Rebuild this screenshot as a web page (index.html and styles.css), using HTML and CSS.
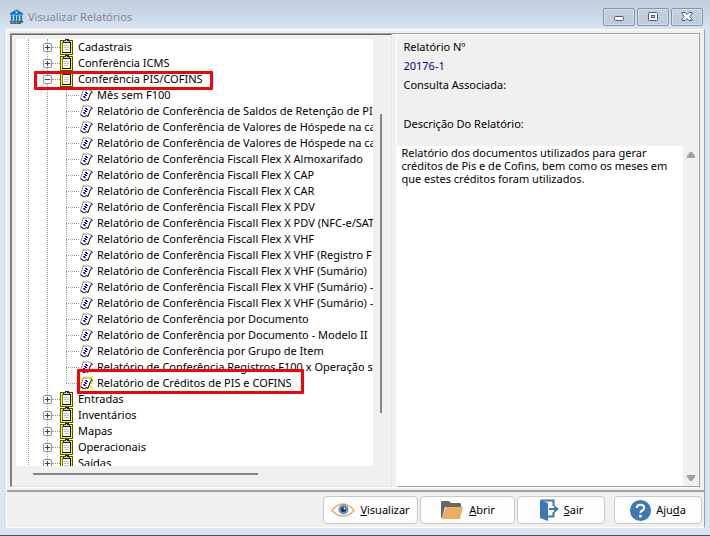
FILE: index.html
```
<!DOCTYPE html>
<html lang="pt-BR">
<head>
<meta charset="utf-8">
<title>Visualizar Relatórios</title>
<link rel="stylesheet" href="styles.css">
</head>
<body>
<svg class="defs" aria-hidden="true">
  <symbol id="folder" viewBox="0 0 13 16">
    <path d="M0 1h13v15H0z" fill="#555500"/>
    <path d="M1 2h11v13H1z" fill="#ffff20"/>
    <path d="M2 3h9v11H2z" fill="#fff"/>
    <path d="M10 3h1v11H2v-1h8z" fill="#000"/>
    <path d="M2.500 3v10" stroke="#808000"/>
    <path d="M4 6.500h5M4 8.500h5M4 10.500h5" stroke="#c4c4c4"/>
    <path d="M3 2h2V0h4v2h1v2H3z" fill="#222"/>
    <path d="M4 2h5v1H4zM6 1h1v1H6z" fill="#ccc"/>
  </symbol>
  <symbol id="leaf" viewBox="0 0 14 14">
    <path d="M4.500 1.500l3 1 1-1 4 1.500-3.500 9-2-1-1.500 1.500-4-2z" fill="#fff" stroke="#888"/>
    <path d="M12.500 3l1 1.500-2 1-2.500 7-2-1-1.500 1.500-4-2" fill="none" stroke="#222"/>
    <path d="M6 4.500h2M7 5.500h2M5 6.500h2M6 7.500h2M4 8.500h2M5 9.500h2" fill="none" stroke="#0000ff"/>
  </symbol>
  <symbol id="plus" viewBox="0 0 9 9">
    <rect x=".5" y=".5" width="8" height="8" rx="1" fill="#f7f7f7" stroke="#919191"/>
    <path d="M2 4.500h5M4.500 2v5" stroke="#24428a"/>
  </symbol>
  <symbol id="minus" viewBox="0 0 9 9">
    <rect x=".5" y=".5" width="8" height="8" rx="1" fill="#f7f7f7" stroke="#919191"/>
    <path d="M2 4.500h5" stroke="#24428a"/>
  </symbol>
</svg>
<div class="window">
  <header class="titlebar">
    <svg class="app-icon" viewBox="0 0 16 16" aria-hidden="true">
      <path d="M1 5.500V4l7-4 7 4v1.500z" fill="#087bb8"/>
      <path d="M7 2h2v2H7z" fill="#cde5f2"/>
      <path d="M3 6v6M6.500 6v6M9.500 6v6M13 6v6" stroke="#087bb8" stroke-width="2"/>
      <path d="M1 12h14v1.500l-3 2H2l-1-1z" fill="#566270"/>
      <path d="M3 13.500h2M7 14h2" stroke="#bcc7d2"/>
    </svg>
    <h1>Visualizar Relatórios</h1>
    <button class="caption" aria-label="Minimizar"><svg viewBox="0 0 12 10"><rect x="1.500" y="4.500" width="9" height="4" rx="1" fill="#fff" stroke="#535666"/></svg></button>
    <button class="caption" aria-label="Maximizar"><svg viewBox="0 0 12 10"><rect x="1.500" y=".5" width="9" height="8" rx="1" fill="#fff" stroke="#535666"/><rect x="4.500" y="3.500" width="3" height="2" fill="#c5d3e4" stroke="#535666"/></svg></button>
    <button class="caption" aria-label="Fechar"><svg viewBox="0 0 12 10"><path d="M1 .5h3l2 2 2-2h3v1.500L8.500 4.500 11 7v1.500H8l-2-2-2 2H1V7l2.500-2.500L1 2z" fill="#fff" stroke="#535666"/></svg></button>
  </header>
  <div class="client">
    <main class="panes">
      <nav class="tree-pane" aria-label="Relatórios">
        <div class="tree-view">
          <ul class="tree">
            <li class="node"><svg class="toggle"><use href="#plus"/></svg><svg class="folder"><use href="#folder"/></svg>Cadastrais</li>
            <li class="node"><svg class="toggle"><use href="#plus"/></svg><svg class="folder"><use href="#folder"/></svg>Conferência ICMS</li>
            <li>
              <div class="node marked-branch"><svg class="toggle"><use href="#minus"/></svg><svg class="folder"><use href="#folder"/></svg>Conferência PIS/COFINS</div>
              <ul class="leaves">
                <li><svg class="leaf"><use href="#leaf"/></svg>Mês sem F100</li>
                <li><svg class="leaf"><use href="#leaf"/></svg>Relatório de Conferência de Saldos de Retenção de PI</li>
                <li><svg class="leaf"><use href="#leaf"/></svg>Relatório de Conferência de Valores de Hóspede na ca</li>
                <li><svg class="leaf"><use href="#leaf"/></svg>Relatório de Conferência de Valores de Hóspede na ca</li>
                <li><svg class="leaf"><use href="#leaf"/></svg>Relatório de Conferência Fiscall Flex X Almoxarifado</li>
                <li><svg class="leaf"><use href="#leaf"/></svg>Relatório de Conferência Fiscall Flex X CAP</li>
                <li><svg class="leaf"><use href="#leaf"/></svg>Relatório de Conferência Fiscall Flex X CAR</li>
                <li><svg class="leaf"><use href="#leaf"/></svg>Relatório de Conferência Fiscall Flex X PDV</li>
                <li><svg class="leaf"><use href="#leaf"/></svg>Relatório de Conferência Fiscall Flex X PDV (NFC-e/SAT</li>
                <li><svg class="leaf"><use href="#leaf"/></svg>Relatório de Conferência Fiscall Flex X VHF</li>
                <li><svg class="leaf"><use href="#leaf"/></svg>Relatório de Conferência Fiscall Flex X VHF (Registro F</li>
                <li><svg class="leaf"><use href="#leaf"/></svg>Relatório de Conferência Fiscall Flex X VHF (Sumário)</li>
                <li><svg class="leaf"><use href="#leaf"/></svg>Relatório de Conferência Fiscall Flex X VHF (Sumário) -</li>
                <li><svg class="leaf"><use href="#leaf"/></svg>Relatório de Conferência Fiscall Flex X VHF (Sumário) -</li>
                <li><svg class="leaf"><use href="#leaf"/></svg>Relatório de Conferência por Documento</li>
                <li><svg class="leaf"><use href="#leaf"/></svg>Relatório de Conferência por Documento - Modelo II</li>
                <li><svg class="leaf"><use href="#leaf"/></svg>Relatório de Conferência por Grupo de Item</li>
                <li><svg class="leaf"><use href="#leaf"/></svg>Relatório de Conferência Registros F100 x Operação s</li>
                <li class="marked-leaf"><svg class="leaf" viewBox="0 0 14 14"><path d="M0 1l4 3M7 0v4M14 0l-4 4M0 7h14M0 13l4-4M7 14v-4M14 13l-4-4" stroke="#ffee20" stroke-width="2"/><use href="#leaf" width="14" height="14"/></svg>Relatório de Créditos de PIS e COFINS</li>
              </ul>
            </li>
            <li class="node"><svg class="toggle"><use href="#plus"/></svg><svg class="folder"><use href="#folder"/></svg>Entradas</li>
            <li class="node"><svg class="toggle"><use href="#plus"/></svg><svg class="folder"><use href="#folder"/></svg>Inventários</li>
            <li class="node"><svg class="toggle"><use href="#plus"/></svg><svg class="folder"><use href="#folder"/></svg>Mapas</li>
            <li class="node"><svg class="toggle"><use href="#plus"/></svg><svg class="folder"><use href="#folder"/></svg>Operacionais</li>
            <li class="node"><svg class="toggle"><use href="#plus"/></svg><svg class="folder"><use href="#folder"/></svg>Saídas</li>
          </ul>
        </div>
        <div class="vscroll"><div class="vthumb"></div></div>
        <div class="hscroll"><div class="hthumb"></div></div>
      </nav>
      <section class="detail">
        <div class="fields">
          <p>Relatório Nº</p>
          <p class="number">20176-1</p>
          <p>Consulta Associada:</p>
          <label for="description">Descrição Do Relatório:</label>
        </div>
        <div class="memo">
          <textarea id="description" readonly>Relatório dos documentos utilizados para gerar créditos de Pis e de Cofins, bem como os meses em que estes créditos foram utilizados.</textarea>
          <div class="memo-scroll">
            <svg viewBox="0 0 8 6"><path d="M3 0h2l3 4v2H0V4z"/></svg>
            <svg viewBox="0 0 8 6"><path d="M0 0h8v2L5 6H3L0 2z"/></svg>
          </div>
        </div>
      </section>
    </main>
    <footer class="actions">
      <button class="wide"><svg class="eye" viewBox="0 0 24 16" aria-hidden="true">
        <path d="M1 8.500Q6 2 12 2t11 6.500Q18 14 12 14T1 8.500z" fill="#fff" stroke="#e9ad5b" stroke-width="1.500"/>
        <circle cx="12.500" cy="7.500" r="5" fill="#5b93c8"/><circle cx="12.500" cy="7.500" r="2.500" fill="#222f40"/><circle cx="13.500" cy="6.500" r="1" fill="#fff"/></svg><span><u>V</u>isualizar</span></button>
      <button class="wide"><svg class="open" viewBox="0 0 24 20" aria-hidden="true">
        <path d="M1 18V2l1-1h7l2 2h9l1 1v3H5L2 18z" fill="#666769"/><path d="M6 7h17l-3 12H2z" fill="#eaae5e"/></svg><span><u>A</u>brir</span></button>
      <button><svg class="exit" viewBox="0 0 20 22" aria-hidden="true">
        <path d="M1 1l8 3v18l-8-3z" fill="#3b78b5"/><path d="M2 1.500h12.500V7M9 17.500h5.500V13" fill="none" stroke="#3b78b5" stroke-width="2"/><path d="M10 9h5V6l5 4-5 4v-3h-5z" fill="#3b78b5"/></svg><span><u>S</u>air</span></button>
      <button class="help"><svg class="question" viewBox="0 0 20 20" aria-hidden="true">
        <circle cx="10" cy="10" r="10" fill="#3b78b5"/><path d="M6.500 7.500Q6.500 4.500 10 4.500t3.500 3q0 1.500-1.800 2.500T10 12.500" fill="none" stroke="#fff" stroke-width="2"/><circle cx="10" cy="15.500" r="1.400" fill="#fff"/></svg><span>Aju<u>d</u>a</span></button>
    </footer>
  </div>
</div>
</body>
</html>
```
FILE: styles.css
```
*, *::before, *::after { box-sizing: border-box; }
body {
  margin: 0;
  font: 11px/16px "Noto Sans", "Open Sans", sans-serif;
  color: #000;
}
h1, p, ul { margin: 0; padding: 0; font: inherit; list-style: none; }
button { font: inherit; color: inherit; padding: 0; }
.defs { position: absolute; width: 0; height: 0; }

.window {
  display: flex;
  flex-direction: column;
  height: 100vh;
  padding: 0 5px 7px 6px;
  background: linear-gradient(#bfcddb, #d7e4f2 30px);
  border-bottom: 1px solid #4b4f55;
}
.titlebar {
  display: flex;
  align-items: center;
  gap: 2px;
  height: 29px;
  flex: none;
  padding: 5px 2px 0 3px;
}
.app-icon { width: 15px; height: 16px; }
.titlebar h1 { flex: 1; padding-left: 2px; color: #808890; }
.caption {
  display: grid;
  place-items: center;
  width: 32px;
  height: 18px;
  border: 1px solid #8593ad;
  border-radius: 2px;
  background: linear-gradient(#c3d1e1, #bccbdd);
  box-shadow: inset 0 0 0 1px #d2deeb;
}
.caption svg { width: 12px; height: 10px; }

.client {
  display: flex;
  flex-direction: column;
  flex: 1;
  min-height: 0;
  background: #f0f0f0;
  border: 1px solid #fff;
  border-right-color: #a0a0a0;
}
.panes {
  display: grid;
  grid-template-columns: minmax(0, 383fr) minmax(0, 303fr);
  gap: 4px;
  flex: 1;
  min-height: 0;
  margin: 3px 4px 2px 3px;
  border-top: 1px solid #a0a0a0;
  border-right: 1px solid #a0a0a0;
  border-bottom: 1px solid #fff;
}

.tree-pane {
  display: grid;
  grid-template: minmax(0, 1fr) 20px / minmax(0, 1fr) 18px;
  min-height: 0;
  padding: 4px 0 0 4px;
  border: 1px solid #e3e3e3;
  border-top-color: #696969;
  border-left: 2px solid #808080;
}
.tree-view { overflow: hidden; background: #fff; }
.tree {
  position: relative;
  padding-left: 25px;
  white-space: nowrap;
}
.tree::before, .tree::after {
  content: "";
  position: absolute;
  top: 0;
  bottom: 0;
  left: 12px;
  border-left: 1px dotted #999;
}
.tree::after { left: 31px; }
.node {
  position: relative;
  z-index: 1;
  display: flex;
  align-items: center;
  height: 16px;
  padding-left: 2px;
}
.node::after {
  content: "";
  position: absolute;
  left: 11px;
  top: 8px;
  width: 8px;
  border-top: 1px dotted #999;
}
.toggle { width: 9px; height: 9px; margin-top: 1px; }
.folder { width: 13px; height: 16px; margin: 0 5px 0 8px; }

.leaves { position: relative; padding-left: 25px; }
.leaves::before {
  content: "";
  position: absolute;
  left: 25px;
  top: 0;
  bottom: 8px;
  border-left: 1px dotted #999;
}
.leaves li {
  position: relative;
  display: flex;
  align-items: center;
  height: 16px;
}
.leaves li::before {
  content: "";
  flex: none;
  width: 13px;
  border-top: 1px dotted #999;
}
.leaf { flex: none; width: 14px; height: 14px; margin-right: 4px; }

/* Red highlight frames drawn over the tree rows */
.marked-branch::before, .marked-leaf::after {
  content: "";
  position: absolute;
  z-index: 2;
  border: 3px solid #f90008;
  border-radius: 1px;
}
.marked-branch::before { left: -7px; top: 0; width: 179px; height: 19px; }
.leaves .marked-leaf { z-index: 2; }
.marked-leaf::after { left: 11px; top: -6px; width: 227px; height: 25px; }

.vscroll { display: flex; justify-content: center; padding: 75px 2px 53px 0; }
.vthumb { width: 2px; background: #858585; }
.hscroll { padding: 7px 0 0 17px; }
.hthumb { width: 66%; height: 2px; background: #858585; }

.detail {
  display: flex;
  flex-direction: column;
  min-width: 0;
  min-height: 0;
  border-left: 1px solid #fff;
  border-top: 1px solid #fff;
}
.fields {
  display: flex;
  flex-direction: column;
  gap: 3px;
  padding: 4px 6px 14px;
}
.number { color: #000080; }
.fields label { padding-top: 20px; }
.memo {
  display: flex;
  flex: 1;
  min-height: 0;
  background: #fff;
  border-bottom: 1px solid #a0a0a0;
}
textarea {
  flex: 1;
  min-width: 0;
  padding: 0 12px 0 4px;
  border: 0;
  outline: 0;
  resize: none;
  overflow: hidden;
  background: transparent;
  color: inherit;
  font: inherit;
  line-height: 13px;
}
.memo-scroll {
  display: flex;
  flex-direction: column;
  justify-content: space-between;
  align-items: center;
  width: 16px;
  padding: 6px 0 5px;
  background: #f0f0f0;
}
.memo-scroll svg { width: 8px; height: 6px; fill: #a0a0a0; }

.actions {
  display: flex;
  justify-content: flex-end;
  gap: 2px;
  padding: 4px 2px 3px;
  border-top: 2px solid #a0a0a0;
}
.actions button {
  display: flex;
  align-items: center;
  justify-content: center;
  gap: 5px;
  width: 88px;
  height: 28px;
  border: 1px solid #c8c8c8;
  border-radius: 4px;
  background: #fdfdfd;
}
.actions .wide { width: 95px; }
.actions .help { margin-left: 7px; }
.eye { width: 24px; height: 16px; }
.open { width: 24px; height: 20px; }
.exit { width: 20px; height: 22px; }
.question { width: 21px; height: 21px; }
```
